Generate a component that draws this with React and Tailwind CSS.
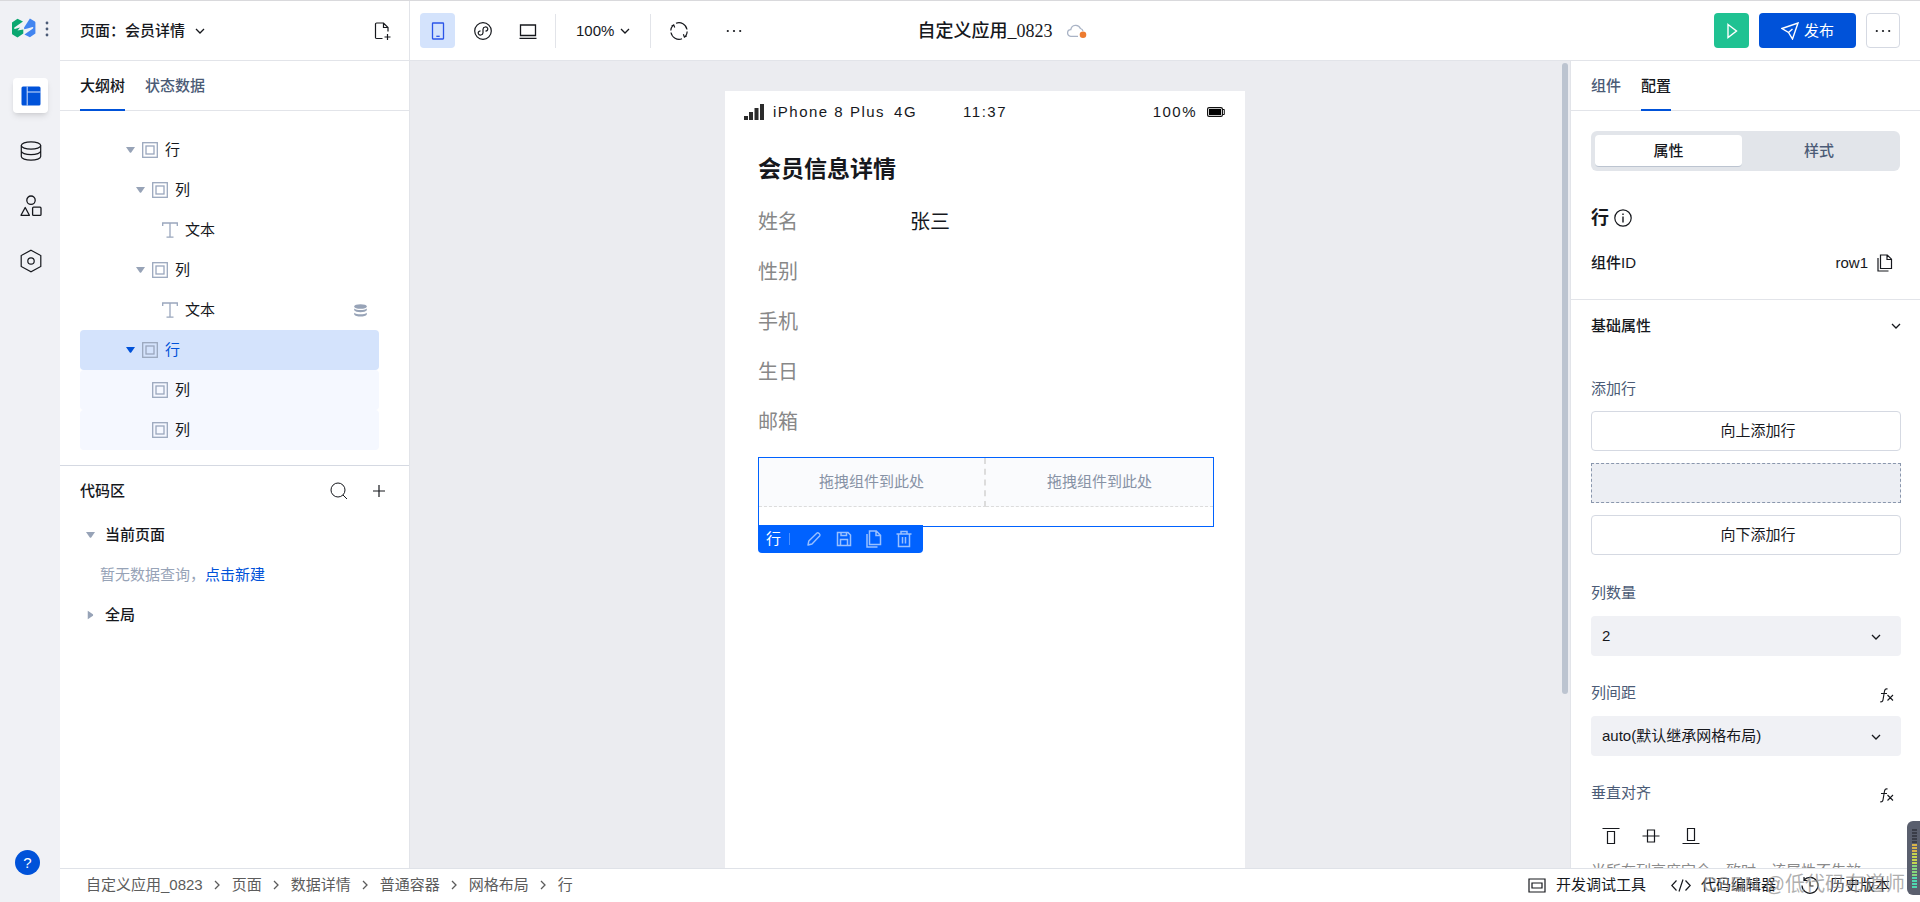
import React, { useState } from 'react';
import clsx from 'clsx';

const Svg = ({ size = 18, className, children, viewBox = '0 0 18 18', width = 1 }) => (
  <svg
    width={size}
    height={size}
    viewBox={viewBox}
    fill="none"
    stroke="currentColor"
    strokeWidth={width}
    className={clsx('shrink-0', className)}
    aria-hidden="true"
  >
    {children}
  </svg>
);

const Chevron = ({ className }) => (
  <Svg size={10} viewBox="0 0 10 10" width={1.3} className={className}>
    <path d="M1 3l4 4 4-4" />
  </Svg>
);

const Caret = ({ className }) => (
  <svg width="9" height="6" viewBox="0 0 9 6" className={clsx('shrink-0', className)} aria-hidden="true">
    <path d="M0 0h9L5.2 5.4a1 1 0 0 1-1.4 0z" fill="currentColor" />
  </svg>
);

const Logo = () => (
  <svg width="24" height="20" viewBox="0 0 24 20" aria-hidden="true">
    <path d="M0 4.500L5.500.8 11 3.400 2.400 9.600Q1.400 10.600 2.800 10.900L8 9.600 5.500 12.500 11.300 11.500V15.600L5.500 19.500.5 16.600Q0 16.200 0 15.600z" fill="#0aa770" />
    <path d="M23.400 15.500L17.900 19.200 12.400 16.600 21 10.400Q22 9.400 20.600 9.100L15.400 10.400 12.100 11.300 12.100 9.500 17.900.5 22.900 3.400Q23.400 3.800 23.400 4.400z" fill="#4285f0" />
  </svg>
);

const BoxIcon = () => (
  <Svg size={16} viewBox="0 0 16 16" width={1.3} className="text-[#9aa7bd]">
    <rect x=".7" y=".7" width="14.6" height="14.6" />
    <rect x="4" y="4" width="8" height="8" />
  </Svg>
);

const TextIcon = () => (
  <Svg size={16} viewBox="0 0 16 16" width={1.3} className="text-[#9aa7bd]">
    <path d="M.7 4V1h14.6v3M8 1v14M4.5 15.2h7" />
  </Svg>
);

const CopyIcon = ({ size = 18, width = 1.2 }) => (
  <Svg size={size} width={width}>
    <path d="M4.5 1h6.8l4.2 4.2v9.3h-11zM11 1v4.5h4.5M2 4v13h10.5" />
  </Svg>
);

const Dots = () => (
  <svg width="16" height="4" viewBox="0 0 16 4" fill="currentColor" aria-hidden="true">
    <circle cx="1.8" cy="2" r="1.1" />
    <circle cx="8" cy="2" r="1.1" />
    <circle cx="14.2" cy="2" r="1.1" />
  </svg>
);

const FxIcon = () => (
  <Svg size={16} viewBox="0 0 16 16" width={1.1}>
    <path d="M8.6 2C6.600 1.400 5.800 2.400 5.500 4.200L4 12.800c-.3 1.600-1.200 2.400-2.800 2M2 6.500h6M8.500 8l5.500 5.500M14 8l-5.500 5.500" />
  </Svg>
);

const railItems = [
  {
    id: 'pages',
    label: '页面',
    icon: (
      <svg width="20" height="20" viewBox="0 0 20 20" fill="#0052d9" aria-hidden="true">
        <rect x=".5" y=".5" width="19" height="19" rx="1.5" />
        <path d="M6.200.5v19M6.200 6h13.300" stroke="#d4e3fc" />
      </svg>
    ),
  },
  {
    id: 'data',
    label: '数据',
    icon: (
      <Svg size={22} viewBox="0 0 22 22" width={1.2}>
        <ellipse cx="11" cy="5.5" rx="9.7" ry="3.7" />
        <path d="M1.3 5.5v11c0 2 4.3 3.7 9.7 3.7s9.7-1.7 9.7-3.7v-11M1.3 11c0 2 4.3 3.7 9.7 3.7s9.7-1.7 9.7-3.7" />
      </Svg>
    ),
  },
  {
    id: 'assets',
    label: '素材',
    icon: (
      <Svg size={22} viewBox="0 0 22 22" width={1.3}>
        <circle cx="11" cy="5.2" r="4.2" />
        <path d="M5.2 12.5L1 20.3h8.4z" strokeLinejoin="round" />
        <rect x="12.6" y="12.2" width="8.4" height="8.2" rx="1" />
      </Svg>
    ),
  },
  {
    id: 'settings',
    label: '设置',
    icon: (
      <Svg size={24} viewBox="0 0 24 24" width={1.2}>
        <path d="M12 1.200l9.800 5.300v11L12 22.800l-9.800-5.300v-11z" />
        <circle cx="12" cy="12" r="3.200" />
      </Svg>
    ),
  },
];

const treeNodes = [
  { id: 1, label: '行', pad: 'pl-[46px]', open: true },
  { id: 2, label: '列', pad: 'pl-[56px]', open: true },
  { id: 3, label: '文本', pad: 'pl-[66px]', text: true },
  { id: 4, label: '列', pad: 'pl-[56px]', open: true },
  { id: 5, label: '文本', pad: 'pl-[66px]', text: true, bound: true },
  { id: 6, label: '行', pad: 'pl-[46px]', open: true, selected: true },
  { id: 7, label: '列', pad: 'pl-[56px]', child: true },
  { id: 8, label: '列', pad: 'pl-[56px]', child: true },
];

const fields = [
  { label: '姓名', value: '张三' },
  { label: '性别' },
  { label: '手机' },
  { label: '生日' },
  { label: '邮箱' },
];

const crumbs = ['自定义应用_0823', '页面', '数据详情', '普通容器', '网格布局', '行'];

function Rail() {
  return (
    <aside className="w-[60px] shrink-0 bg-[#f0f1f5] flex flex-col pb-[27px]">
      <div className="h-[77px] pt-[17px] pl-3 flex items-start gap-[9px]">
        <Logo />
        <button aria-label="菜单" className="pt-[3px]">
          <svg width="4" height="16" viewBox="0 0 4 16" fill="#4b5b76" aria-hidden="true">
            <circle cx="2" cy="2" r="1.4" />
            <circle cx="2" cy="8" r="1.4" />
            <circle cx="2" cy="14" r="1.4" />
          </svg>
        </button>
      </div>
      <nav className="flex flex-col gap-5 pl-[13px]">
        {railItems.map((item, i) => (
          <button
            key={item.id}
            aria-label={item.label}
            className={clsx(
              'w-[35px] h-[35px] rounded flex items-center justify-center',
              i === 0 && 'bg-white shadow-md'
            )}
          >
            {item.icon}
          </button>
        ))}
      </nav>
      <button className="mt-auto ml-[15px] w-[25px] h-[25px] rounded-full bg-[#0052d9] text-white text-[15px] leading-none flex items-center justify-center">
        ?
      </button>
    </aside>
  );
}

function Header() {
  return (
    <header className="h-[60px] shrink-0 flex items-center border-b border-[#e2e4e9] bg-white">
      <div className="flex-1 basis-0 h-full flex items-center">
        <div className="w-[350px] h-full shrink-0 border-r border-[#e2e4e9] flex items-center justify-between pl-5 pr-[17px]">
          <button className="flex items-center gap-[10px] font-medium">
            页面：会员详情
            <Chevron />
          </button>
          <button aria-label="新建页面">
            <Svg width={1.2}>
              <path d="M8.5 16.500H2.600A1.100 1.100 0 0 1 1.500 15.400V2.100A1.100 1.100 0 0 1 2.600 1H9.500l4.500 4.500V9.500M9.500 1v4.500H14M13.500 12v6M10.500 15h6" />
            </Svg>
          </button>
        </div>
        <div className="flex items-center gap-[10px] pl-[10px]">
          <button aria-label="手机" className="w-[35px] h-[35px] rounded bg-[#d4e3fc] text-[#2b55e8] flex items-center justify-center">
            <Svg width={1.3}>
              <rect x="3.5" y="1" width="11" height="16" rx=".5" />
              <path d="M7.3 14.3h3.4" />
            </Svg>
          </button>
          <button aria-label="小程序" className="w-[35px] h-[35px] flex items-center justify-center">
            <Svg width={1.2}>
              <circle cx="9" cy="9" r="8.3" />
              <path d="M6.5 8.800C4.500 9 4 10.600 4.300 11.600c.8 2.200 4.500 1.800 4.700-.8V7.200c.2-2.600 3.900-3 4.700-.8.3 1-.2 2.600-2.200 2.800" />
            </Svg>
          </button>
          <button aria-label="电脑" className="w-[35px] h-[35px] flex items-center justify-center">
            <Svg width={1.3}>
              <path d="M1.500 3h15v10.500h-15zM.5 16.300h17" />
            </Svg>
          </button>
          <div className="w-px h-[34px] bg-[#e2e4e9]" />
          <button className="flex items-center gap-[6px] px-[10px]">
            100%
            <Chevron />
          </button>
          <div className="w-px h-[34px] bg-[#e2e4e9]" />
          <button aria-label="刷新" className="w-[35px] h-[35px] flex items-center justify-center">
            <Svg width={1.2}>
              <path d="M6 1.300A8.200 8.200 0 0 1 17 7.500M17.200 9.500A8.200 8.200 0 0 1 15.500 14.200M12 16.700A8.200 8.200 0 0 1 1 10.500M.8 8.500A8.200 8.200 0 0 1 3 3.400M1.500 4.200l2.200-1.300 1 2.600M16.800 13.800l-2.400 1.300-1-2.800" />
            </Svg>
          </button>
          <button aria-label="更多" className="w-[35px] h-[35px] ml-[10px] flex items-center justify-center">
            <Dots />
          </button>
        </div>
      </div>
      <div className="flex items-center gap-[14px] pl-11">
        <h1 className="font-['Liberation_Serif','Noto_Sans_CJK_SC',serif] text-[18px] font-medium">自定义应用_0823</h1>
        <svg width="20" height="16" viewBox="0 0 20 16" fill="none" aria-hidden="true">
          <path d="M11 13.400H4.200A3.400 3.400 0 0 1 3.800 6.600 5 5 0 0 1 13.400 5.500 4 4 0 0 1 16 8" stroke="#a9b3c5" strokeWidth="1.3" />
          <circle cx="16" cy="11.8" r="3.3" fill="#ed7b2f" />
        </svg>
      </div>
      <div className="flex-1 basis-0 flex items-center justify-end gap-[10px] pr-5">
        <button aria-label="预览" className="w-[35px] h-[35px] rounded bg-[#1fc292] text-white flex items-center justify-center">
          <Svg width={1.4}>
            <path d="M5 2.500L13.500 9 5 15.500z" />
          </Svg>
        </button>
        <button className="w-[97px] h-[35px] rounded bg-[#0052d9] text-white flex items-center justify-center gap-[5px]">
          <Svg width={1.4}>
            <path d="M1 6.500L17 1l-5.500 16-4-6.500zM7.500 10.500l4-3.500" />
          </Svg>
          发布
        </button>
        <button aria-label="更多操作" className="w-[34px] h-[35px] rounded border border-[#d5d9e2] flex items-center justify-center">
          <Dots />
        </button>
      </div>
    </header>
  );
}

function Tabs({ items, active, onChange }) {
  return (
    <div className="h-[50px] shrink-0 flex gap-5 pl-5 border-b border-[#e2e4e9]">
      {items.map((item) => (
        <button
          key={item}
          onClick={() => onChange(item)}
          className={clsx(
            'h-[50px] pb-1 pt-[6px] font-medium border-b-2',
            item === active ? 'border-[#0052d9]' : 'border-transparent text-[#4b5b76]'
          )}
        >
          {item}
        </button>
      ))}
    </div>
  );
}

function OutlinePanel() {
  const [tab, setTab] = useState('大纲树');

  return (
    <section className="w-[350px] shrink-0 border-r border-[#e2e4e9] bg-white flex flex-col">
      <Tabs items={['大纲树', '状态数据']} active={tab} onChange={setTab} />
      <ul className="pt-[19px] pb-[15px] pl-5 pr-[30px] border-b border-[#d5d9e2]">
        {treeNodes.map((node) => (
          <li
            key={node.id}
            className={clsx(
              'h-10 rounded flex items-center gap-[7px] pr-3',
              node.pad,
              node.selected && 'bg-[#d4e3fc] text-[#0052d9]',
              node.child && 'bg-[#f5f8ff]'
            )}
          >
            {node.open ? (
              <Caret className={node.selected ? 'text-[#0052d9]' : 'text-[#97a3b7]'} />
            ) : (
              <span className="w-[9px]" />
            )}
            {node.text ? <TextIcon /> : <BoxIcon />}
            <span>{node.label}</span>
            {node.bound && (
              <svg width="13" height="13" viewBox="0 0 13 13" fill="#97a3b7" className="ml-auto" aria-hidden="true">
                <ellipse cx="6.5" cy="2.5" rx="6.3" ry="2.3" />
                <path d="M.2 4.600c2.500 2 10.100 2 12.600 0v1.600c-1.300 2.600-11.300 2.600-12.600 0zM.2 8.800c2.500 2 10.100 2 12.600 0v1.600c-1.300 2.800-11.300 2.800-12.600 0z" />
              </svg>
            )}
          </li>
        ))}
      </ul>
      <div className="h-[49px] flex items-center pl-5 pr-[23px]">
        <h2 className="font-medium">代码区</h2>
        <button aria-label="搜索" className="ml-auto">
          <Svg size={18}>
            <circle cx="8" cy="8" r="7" />
            <path d="M13 13l4 4" />
          </Svg>
        </button>
        <button aria-label="新增" className="ml-6">
          <Svg size={14} viewBox="0 0 14 14" width={1.2}>
            <path d="M7 1v12M1 7h12" />
          </Svg>
        </button>
      </div>
      <div className="pl-[26px]">
        <button className="h-10 flex items-center gap-[10px] font-medium">
          <Caret className="text-[#97a3b7]" />
          当前页面
        </button>
        <p className="h-10 flex items-center pl-[14px] text-[#97a3b7]">
          暂无数据查询，
          <a href="#new" className="text-[#0052d9]">点击新建</a>
        </p>
        <button className="h-10 flex items-center gap-[10px] font-medium">
          <Caret className="-rotate-90 text-[#97a3b7]" />
          全局
        </button>
      </div>
    </section>
  );
}

function Phone() {
  return (
    <div className="w-[520px] bg-white text-[20px]">
      <div className="h-[42px] pl-[19px] pr-5 flex items-center text-[15px] tracking-widest">
        <svg width="20" height="16" viewBox="0 0 20 16" fill="#2b2b2b" aria-hidden="true">
          <path d="M0 12h4v4H0zM5 8h4v8H5zM10.500 4h4v12h-4zM16 0h4v16h-4z" />
        </svg>
        <span className="ml-[9px]">iPhone 8 Plus</span>
        <span className="ml-[9px]">4G</span>
        <span className="ml-[46px]">11:37</span>
        <span className="ml-auto mr-[10px]">100%</span>
        <svg width="18" height="10" viewBox="0 0 18 10" aria-hidden="true">
          <rect x=".6" y=".6" width="14.8" height="8.8" rx="1.5" fill="none" stroke="#111" strokeWidth="1.2" />
          <rect x="2" y="2" width="12" height="6" fill="#000" />
          <path d="M15.500 2.500h1.800v5h-1.800" fill="none" stroke="#111" />
        </svg>
      </div>
      <div className="pl-[33px] pr-[31px] pt-4">
        <h2 className="text-[23px] leading-10 font-bold mb-2">会员信息详情</h2>
        <dl>
          {fields.map((field) => (
            <div key={field.label} className="h-[50px] grid grid-cols-3 items-center">
              <dt className="text-[#888]">{field.label}</dt>
              <dd className="col-span-2">{field.value}</dd>
            </div>
          ))}
        </dl>
        <div className="relative mt-[10px] h-[70px] border border-[#0062ff] text-[15px] text-[#8792a5]">
          <div className="grid grid-cols-2">
            <div className="h-[49px] flex items-center justify-center bg-[#fafbfd] border-b border-r-2 border-dashed border-[#dcdcdc]">拖拽组件到此处</div>
            <div className="h-[49px] flex items-center justify-center bg-[#fafbfd] border-b border-dashed border-[#dcdcdc]">拖拽组件到此处</div>
          </div>
          <div className="absolute -left-px top-[67px] h-7 pl-2 pr-[10px] rounded-b bg-[#0062ff] text-[#99c0ff] flex items-center gap-3">
            <span className="text-white">行</span>
            <span className="w-px h-3 bg-[#4d91ff] -ml-1 mr-[3px]" />
            <button aria-label="编辑">
              <Svg width={1.4}>
                <path d="M3 15l.8-4L12 3c1-1 3.800 1.500 2.800 2.800L7 14z" strokeLinejoin="round" />
              </Svg>
            </button>
            <button aria-label="保存">
              <Svg width={1.5}>
                <path d="M2.500 2.500h10.500l2.500 2.500v10.500h-13zM5.500 15.500v-6h7v6M6 2.500v3h5.500v-3" />
              </Svg>
            </button>
            <button aria-label="复制">
              <CopyIcon width={1.5} />
            </button>
            <button aria-label="删除">
              <Svg width={1.5}>
                <path d="M1.500 4h15M6 4V1.500h6V4M3.500 4v12.500h11V4M7.500 7v6.500M10.500 7v6.500" />
              </Svg>
            </button>
          </div>
        </div>
      </div>
    </div>
  );
}

function Canvas() {
  return (
    <main className="flex-1 min-w-0 bg-[#ebecf0] flex overflow-hidden">
      <div className="flex-1 flex justify-center pt-[30px]">
        <Phone />
      </div>
      <div className="w-2 mr-[2px] shrink-0 pt-[2px]">
        <div className="w-[6px] h-[631px] rounded-full bg-[#bcc4d0] ml-auto" />
      </div>
    </main>
  );
}

function SelectField({ id, label, options, fx }) {
  return (
    <div className="flex flex-col">
      <div className="h-[46px] flex items-center justify-between pr-[6px]">
        <label htmlFor={id} className="text-[#4b5b76]">{label}</label>
        {fx && <button aria-label="表达式" className="pt-1"><FxIcon /></button>}
      </div>
      <div className="relative">
        <select id={id} className="w-full h-10 rounded bg-[#f0f1f5] pl-[11px] pr-10 appearance-none">
          {options.map((o) => (
            <option key={o}>{o}</option>
          ))}
        </select>
        <Chevron className="absolute right-5 top-4 pointer-events-none" />
      </div>
    </div>
  );
}

function ConfigPanel() {
  const [tab, setTab] = useState('配置');

  return (
    <aside className="w-[350px] shrink-0 border-l border-[#e2e4e9] bg-white flex flex-col overflow-hidden">
      <Tabs items={['组件', '配置']} active={tab} onChange={setTab} />
      <div className="px-5 pt-5 h-[189px] shrink-0 border-b border-[#e2e4e9]">
        <div className="h-10 p-1 rounded-md bg-[#e2e5ea] flex font-medium">
          <button className="w-[147px] rounded-sm bg-white border-b border-[#bcc4d0]">属性</button>
          <button className="flex-1 text-[#4b5b76]">样式</button>
        </div>
        <div className="mt-8 h-[30px] flex items-center gap-[5px]">
          <h2 className="text-[18px] font-bold">行</h2>
          <Svg width={1.2}>
            <circle cx="9" cy="9" r="8.2" />
            <path d="M9 7.500v6M9 4.500v1.500" strokeWidth="1.4" />
          </Svg>
        </div>
        <div className="mt-[15px] h-[30px] flex items-center pr-[6px]">
          <span className="font-medium">组件ID</span>
          <span className="ml-auto mr-2">row1</span>
          <button aria-label="复制ID"><CopyIcon /></button>
        </div>
      </div>
      <div className="pl-5 pr-[19px]">
        <button className="w-full h-[52px] flex items-center justify-between font-medium">
          基础属性
          <Chevron />
        </button>
        <h3 className="h-[59px] pt-[26px] text-[#4b5b76]">添加行</h3>
        <div className="flex flex-col gap-3 pb-[15px]">
          <button className="h-10 rounded border border-[#d5d9e2] pl-6">向上添加行</button>
          <div className="h-10 border border-dashed border-[#8a97ad] bg-[#eceef3]" />
          <button className="h-10 rounded border border-[#d5d9e2] pl-6">向下添加行</button>
        </div>
        <div className="flex flex-col gap-[14px]">
          <SelectField id="cols" label="列数量" options={['2', '1', '3', '4']} />
          <SelectField id="gap" label="列间距" options={['auto(默认继承网格布局)']} fx />
          <div>
            <div className="h-[46px] flex items-center justify-between pr-[6px]">
              <span className="text-[#4b5b76]">垂直对齐</span>
              <button aria-label="表达式" className="pt-1"><FxIcon /></button>
            </div>
            <div className="h-10 flex items-center gap-[22px] pl-[11px]">
              <button aria-label="顶部对齐">
                <Svg width={1.2}>
                  <path d="M.5 1.500h17M5.500 4.500h7v12h-7z" />
                </Svg>
              </button>
              <button aria-label="居中对齐">
                <Svg width={1.2}>
                  <path d="M.5 9h17M5.500 3h7v12h-7z" />
                </Svg>
              </button>
              <button aria-label="底部对齐">
                <Svg width={1.2}>
                  <path d="M.5 16.500h17M5.500 1.500h7v12h-7z" />
                </Svg>
              </button>
            </div>
            <p className="pt-1 text-[#8a8a8a] whitespace-nowrap">当所在列高度完全一致时，该属性不生效</p>
          </div>
        </div>
      </div>
    </aside>
  );
}

function Footer() {
  return (
    <footer className="relative h-[34px] shrink-0 border-t border-[#dfe2e8] bg-white flex items-center pl-[26px] pr-[30px] pb-[2px]">
      <nav className="flex items-center text-[#5c5c5c]">
        {crumbs.map((crumb, i) => (
          <React.Fragment key={crumb}>
            {i > 0 && (
              <span className="w-[29px] flex justify-center">
                <Chevron className="-rotate-90" />
              </span>
            )}
            <a href={`#crumb-${i}`}>{crumb}</a>
          </React.Fragment>
        ))}
      </nav>
      <div className="ml-auto flex items-center gap-[25px]">
        <button className="flex items-center gap-[10px]">
          <Svg width={1.2}>
            <path d="M1 3h16v13H1zM4 7h10v5H4z" />
          </Svg>
          开发调试工具
        </button>
        <button className="flex items-center gap-[10px]">
          <Svg size={20} viewBox="0 0 20 18" width={1.2}>
            <path d="M5.500 4.500L.8 9.500l4.700 5M14.500 4.500l4.700 5-4.700 5M12 3.500L8 15.500" />
          </Svg>
          代码编辑器
        </button>
        <button className="flex items-center gap-[11px]">
          <Svg width={1.2}>
            <path d="M3 4A8 8 0 1 1 1 9.500M3 1v3.500h3.500M9 5.500V10h3.500" />
          </Svg>
          历史版本
        </button>
      </div>
      <span className="absolute right-[15px] top-0 text-[20px] leading-[30px] text-[#8c8c8c]/70 pointer-events-none whitespace-nowrap">
        CSDN @低代码布道师
      </span>
      <div className="absolute right-0 bottom-[7px] w-[13px] h-[74px] rounded-l-md bg-[#5a5f6e] flex flex-col justify-center pl-[5px] gap-px">
        {Array.from({ length: 20 }, (_, i) => (
          <span
            key={i}
            className={clsx(
              'w-[5px] h-[2px]',
              i < 5 ? 'bg-[#3a3d48]' : i < 8 ? 'bg-[#d9b44a]' : i < 12 ? 'bg-[#c5d54f]' : i < 16 ? 'bg-[#86d67c]' : 'bg-[#4fd6b0]'
            )}
          />
        ))}
      </div>
    </footer>
  );
}

export default function App() {
  return (
    <div className="h-screen flex overflow-hidden border-t border-[#d9d9dc] bg-white font-['Liberation_Sans','Noto_Sans_CJK_SC',sans-serif] text-[15px] leading-[22px] text-[#16181d]">
      <Rail />
      <div className="flex-1 min-w-0 flex flex-col">
        <Header />
        <div className="flex-1 min-h-0 flex">
          <OutlinePanel />
          <Canvas />
          <ConfigPanel />
        </div>
        <Footer />
      </div>
    </div>
  );
}
